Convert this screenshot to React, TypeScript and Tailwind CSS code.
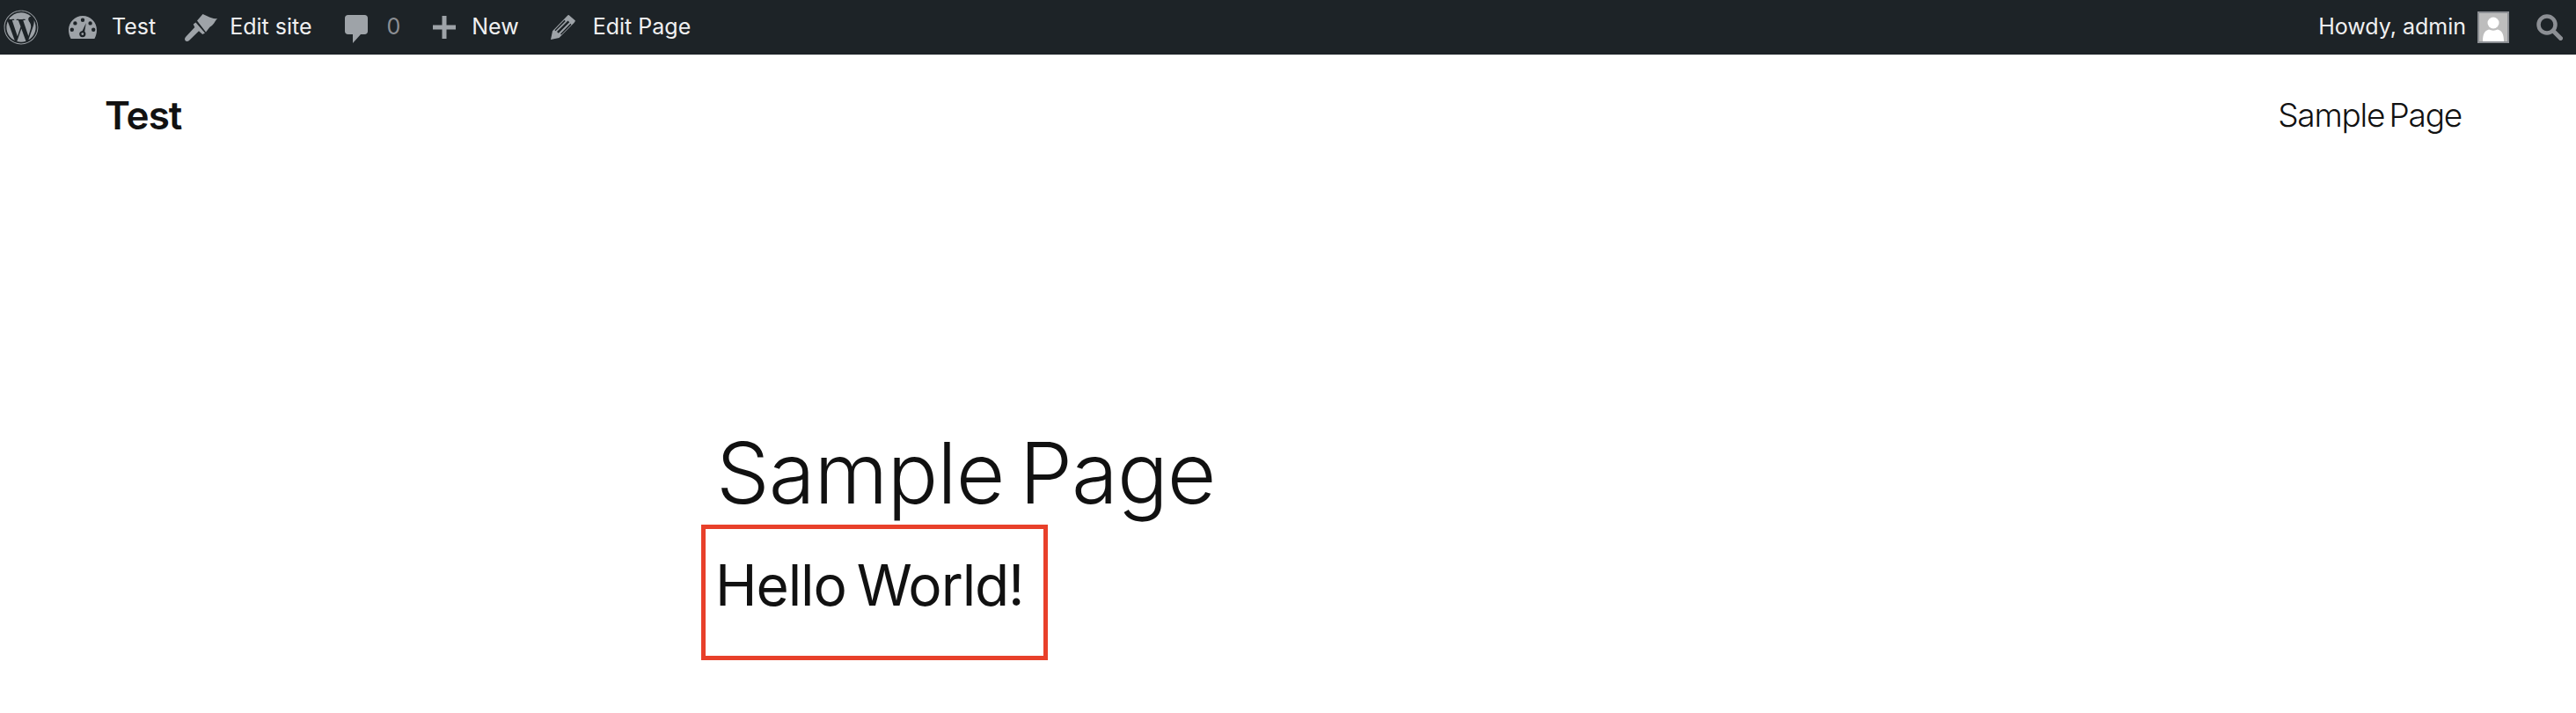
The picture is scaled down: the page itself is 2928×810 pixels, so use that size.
import { FaWordpress } from 'react-icons/fa';

const font = { fontFamily: 'Inter, "Liberation Sans", sans-serif' };

function GaugeIcon() {
  return (
    <svg viewBox="0 0 32 26" className="w-8 h-[26px] fill-[#9ea3a8]">
      <path
        fillRule="evenodd"
        d="M16 0C7.2 0 0 7.2 0 16c0 3.6 1 7 2.6 10h26.8C31 23 32 19.600 32 16 32 7.200 24.800 0 16 0zM16 2.600a2.200 2.200 0 1 1 0 4.400 2.200 2.200 0 0 1 0-4.400zM7.400 6.200a2.200 2.200 0 1 1 0 4.400 2.200 2.200 0 0 1 0-4.400zM24.600 6.200a2.200 2.200 0 1 1 0 4.400 2.200 2.200 0 0 1 0-4.400zM3.800 13.600a2.200 2.200 0 1 1 0 4.400 2.200 2.200 0 0 1 0-4.400zM28.200 13.600a2.200 2.200 0 1 1 0 4.400 2.200 2.200 0 0 1 0-4.400zM19.800 8.200l-1.600 9.600c.8.700 1.200 1.700 1.200 2.800a3.600 3.600 0 1 1-7.200 0c0-1.900 1.500-3.400 3.400-3.600zM15.800 19.200a1.400 1.400 0 1 0 0 2.800 1.400 1.400 0 0 0 0-2.800z"
      />
    </svg>
  );
}

function BrushIcon() {
  return (
    <svg viewBox="0 0 37 31" className="w-[37px] h-[31px] fill-[#9ea3a8]">
      <path d="M14 7.500 20.500 0l5.500 2.500c3 1.400 7 3.200 11 2.600-1.600 1.600-2.600 3.800-3.800 5.400-1.400 1.800-2.900 3.200-4.700 4.200l-4.500 5.800z" />
      <path d="M12.500 9.500l10.500 12-2.800 1.600-4.200-3.900L5 30c-1.400 1.300-3.300 1.300-4.300.2-1-1.200-.9-2.800.3-4.200l10.300-10.900-1.600-3.600z" />
    </svg>
  );
}

function CommentIcon() {
  return (
    <svg viewBox="0 0 26 32" className="w-[26px] h-8 fill-[#9ea3a8]">
      <path d="M3.500 0h19C24.500 0 26 1.500 26 3.500v15c0 2-1.500 3.500-3.500 3.500H18l-9 10v-10H3.500C1.500 22 0 20.500 0 18.500v-15C0 1.500 1.500 0 3.500 0z" />
    </svg>
  );
}

function PlusIcon() {
  return (
    <svg viewBox="0 0 26 26" className="w-[26px] h-[26px] fill-[#9ea3a8]">
      <path d="M10.500 0h5v10.500H26v5H15.500V26h-5V15.500H0v-5h10.500z" />
    </svg>
  );
}

function PencilIcon() {
  return (
    <svg viewBox="0 0 28 28" className="w-7 h-7 fill-[#9ea3a8]">
      <path
        fillRule="evenodd"
        d="M20.500 0 28 6.500c-.3 1-.8 1.800-1.500 2.600L9.500 26 0 28l2-9.700L18.800.9c.5-.5 1-.8 1.700-.9zM19.500 6.500 7 19l1.800 1.700L21.300 8.200zM15.500 5.800 4.500 17.200l1 1L16.800 7zM22.400 9.700 11 21.400l1 1.100L23.500 11z"
      />
    </svg>
  );
}

function SearchIcon() {
  return (
    <svg viewBox="0 0 30 30" className="w-[30px] h-[30px]">
      <circle cx="12" cy="12" r="9.500" fill="none" stroke="#8c8f94" strokeWidth="4.500" />
      <path d="M19 19l8.500 8.500" stroke="#8c8f94" strokeWidth="5" strokeLinecap="round" />
    </svg>
  );
}

function AdminBar() {
  return (
    <div className="h-[62px] bg-[#1d2327] flex items-center justify-between text-[25px] text-[#f0f0f1]">
      <div className="flex items-center">
        <FaWordpress className="ml-1 w-10 h-10 text-[#9ea3a8]" />
        <div className="ml-[34px]"><GaugeIcon /></div>
        <span className="ml-[17px]">Test</span>
        <div className="ml-[33px]"><BrushIcon /></div>
        <span className="ml-[14px]">Edit site</span>
        <div className="ml-[37px] mt-1"><CommentIcon /></div>
        <span className="ml-[22px] text-[#8c8f94]">0</span>
        <div className="ml-[37px]"><PlusIcon /></div>
        <span className="ml-[18px]">New</span>
        <div className="ml-[36px]"><PencilIcon /></div>
        <span className="ml-[20px]">Edit Page</span>
      </div>
      <div className="flex items-center pr-[15px]">
        <span>Howdy, admin</span>
        <div className="ml-[13px] w-9 h-9 border-2 border-[#8c8f94] bg-[#bdbdbd] overflow-hidden flex items-end justify-center">
          <svg viewBox="0 0 32 32" className="w-8 h-8 fill-white">
            <circle cx="16" cy="11" r="6.500" />
            <path d="M4 32c0-8 2-12 7-13.500 3 1.500 7 1.500 10 0C26 20 28 24 28 32z" />
          </svg>
        </div>
        <div className="ml-[31px]"><SearchIcon /></div>
      </div>
    </div>
  );
}

export default function App() {
  return (
    <div className="min-h-[810px] bg-white text-[#111111]" style={font}>
      <AdminBar />

      {/* Header */}
      <header className="flex items-center justify-between h-[138px] pl-[119px] pr-[130px]">
        <span className="text-[44px] font-semibold tracking-[-1px]">Test</span>
        <span className="text-[37px] font-light tracking-[-1.2px] [word-spacing:-4px]">Sample Page</span>
      </header>

      {/* Content */}
      <main className="pl-[797px] pt-[279px]">
        <h1 className="pl-[17px] text-[96px] leading-[116px] font-light tracking-[-0.9px] [word-spacing:-9px]">
          Sample Page
        </h1>
        <div className="mt-px w-[394px] h-[154px] border-[5px] border-[#e8402a] pl-[11px] pt-[25px] text-[64px] leading-[78px] font-normal tracking-[-1.1px] [word-spacing:-5px] whitespace-nowrap">
          Hello World!
        </div>
      </main>
    </div>
  );
}
